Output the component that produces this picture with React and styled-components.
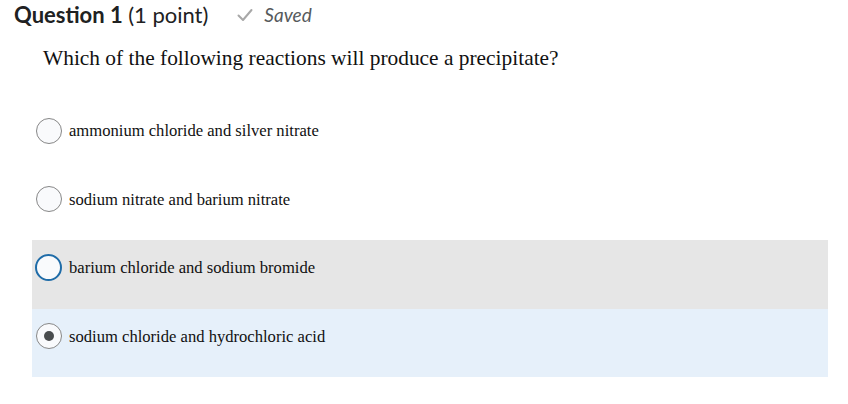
import React from "react";
import styled, { createGlobalStyle } from "styled-components";

const Global = createGlobalStyle`
  html, body { margin: 0; padding: 0; background: #fff; }
  body { width: 848px; height: 404px; overflow: hidden; }
`;

const Page = styled.div`
  padding: 0 20px 0 14px;
`;

const Header = styled.div`
  display: flex;
  align-items: center;
  height: 29px;
  font-family: Lato, "Liberation Sans", sans-serif;
  color: #202122;
`;

const Title = styled.h2`
  margin: 0;
  font-size: 22px;
  font-weight: 700;
`;

const Points = styled.span`
  font-weight: 400;
`;

const Status = styled.span`
  display: flex;
  align-items: center;
  gap: 11px;
  margin-left: 29px;
  font-size: 19px;
  font-style: italic;
  color: #565a5c;
`;

const Prompt = styled.p`
  margin: 15px 0 0 29px;
  font-family: "Liberation Serif", serif;
  font-size: 21.4px;
  color: #111;
  height: 28px;
  line-height: 28px;
`;

const List = styled.div`
  margin: 31px 0 0 18px;
  display: flex;
  flex-direction: column;
`;

const Row = styled.label`
  display: flex;
  align-items: flex-start;
  height: 68.5px;
  padding: 15px 0 0 4px;
  box-sizing: border-box;
  background: ${p => (p.$tone === "hover" ? "#e6e6e6" : p.$tone === "selected" ? "#e6f0fa" : "transparent")};
`;

const Radio = styled.span`
  flex: none;
  width: ${p => (p.$focus ? 27 : 26)}px;
  height: ${p => (p.$focus ? 27 : 26)}px;
  margin-left: ${p => (p.$focus ? -1 : 0)}px;
  margin-top: ${p => (p.$focus ? -1 : -0.5)}px;
  margin-right: ${p => (p.$focus ? 7 : 7)}px;
  box-sizing: border-box;
  border-radius: 50%;
  border: ${p => (p.$focus ? "2px solid #1f6ca8" : "1px solid #878787")};
  background: #f9fafc;
  display: flex;
  align-items: center;
  justify-content: center;
  &::after {
    content: "";
    display: ${p => (p.$checked ? "block" : "none")};
    width: 10px;
    height: 10px;
    border-radius: 50%;
    background: #494c4e;
  }
`;

const OptionText = styled.span`
  font-family: "Liberation Serif", serif;
  font-size: 16.6px;
  line-height: 25px;
  color: #111;
`;

const options = [
  { text: "ammonium chloride and silver nitrate" },
  { text: "sodium nitrate and barium nitrate" },
  { text: "barium chloride and sodium bromide", tone: "hover", focus: true },
  { text: "sodium chloride and hydrochloric acid", tone: "selected", checked: true },
];

export default function App() {
  return (
    <>
      <Global />
      <Page>
        <Header>
          <Title>
            Question 1 <Points>(1 point)</Points>
          </Title>
          <Status>
            <svg width="16" height="14" viewBox="0 0 16 14">
              <path d="M1.5 7.5 L6 12 L14.5 2" fill="none" stroke="#a8a8a8" strokeWidth="2" strokeLinecap="round" strokeLinejoin="round" />
            </svg>
            Saved
          </Status>
        </Header>
        <Prompt>Which of the following reactions will produce a precipitate?</Prompt>
        <List>
          {options.map(o => (
            <Row key={o.text} $tone={o.tone}>
              <Radio $focus={o.focus} $checked={o.checked} />
              <OptionText>{o.text}</OptionText>
            </Row>
          ))}
        </List>
      </Page>
    </>
  );
}
